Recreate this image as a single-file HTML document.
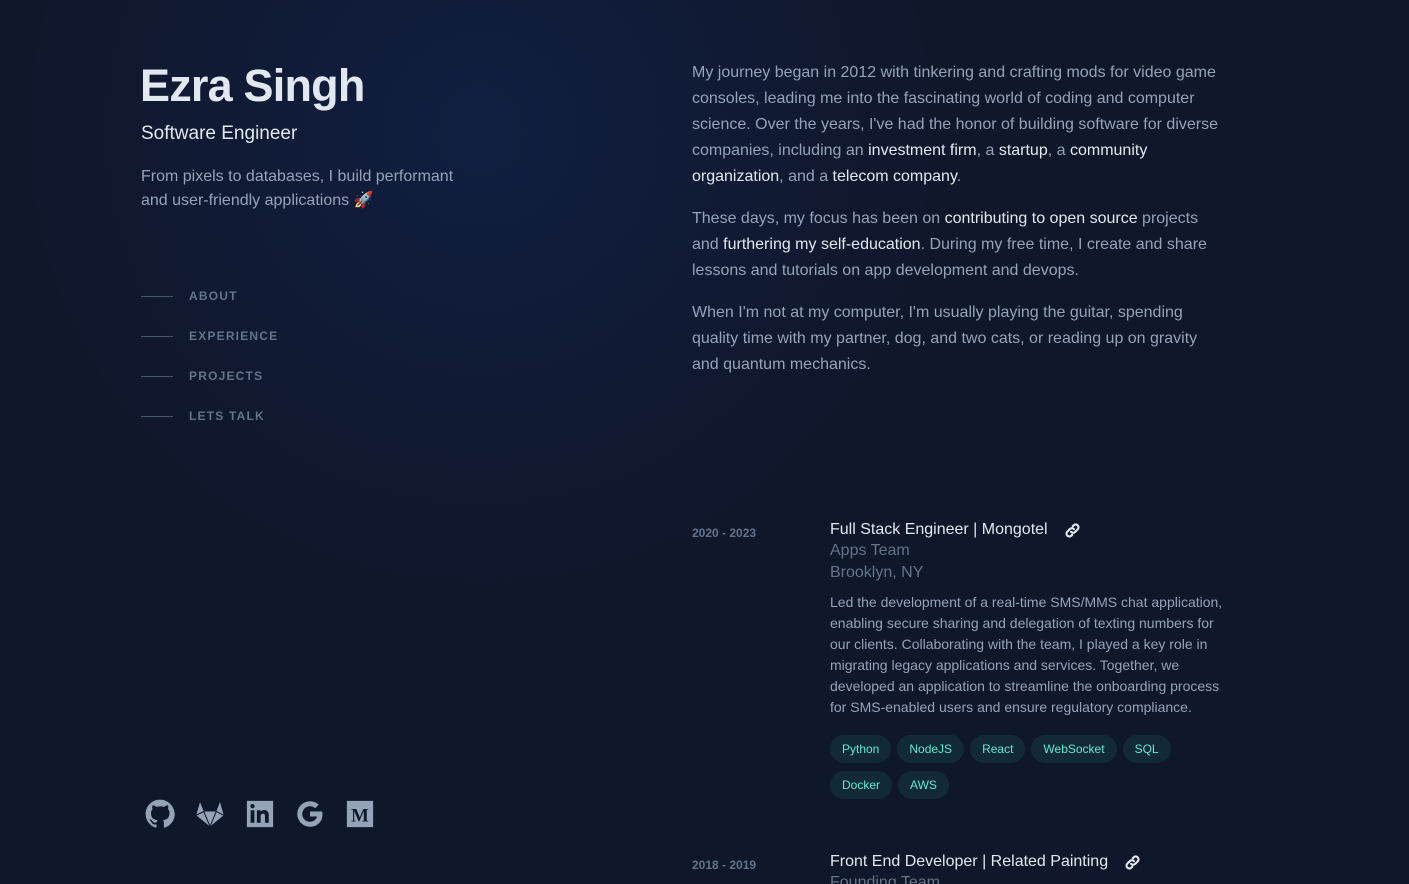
<!DOCTYPE html>
<html><head><meta charset="utf-8"><style>
*{margin:0;padding:0;box-sizing:border-box}
html,body{width:1409px;height:884px;overflow:hidden}
body{background:#0f172a;font-family:"Liberation Sans","DejaVu Sans",sans-serif;color:#94a3b8;position:relative}
.glow{position:absolute;inset:0;background:radial-gradient(600px circle at 480px 130px,rgba(29,78,216,0.13),transparent 80%)}
.abs{position:absolute}
h1{font-size:45px;font-weight:bold;color:#e2e8f0;letter-spacing:-0.8px}
.nav div{position:absolute;left:141px;display:flex;align-items:center;font-size:12px;font-weight:bold;letter-spacing:1.2px;color:#64748b}
.nav span{display:inline-block;width:32px;height:1px;background:#475569;margin-right:16px}
.p{font-size:16px;line-height:26px;width:532px}
.p b{color:#e2e8f0;font-weight:normal}
.date{font-size:12px;font-weight:bold;color:#64748b}
.title{font-size:16px;color:#e2e8f0;display:flex;align-items:center}
.sub{font-size:16px;color:#64748b;line-height:22px}
.desc{font-size:14px;line-height:21px;width:400px}
.tags{display:flex;flex-wrap:wrap;gap:8px 6px;width:400px}
.tags span{background:rgba(45,212,191,0.1);color:#5eead4;font-size:12px;height:28px;line-height:28px;padding:0 12px;border-radius:14px}
svg{fill:#94a3b8}
.lk{margin-left:16px;fill:none;stroke:#e2e8f0;stroke-width:3;stroke-linecap:round}
</style></head><body>
<div class="glow"></div>
<h1 class="abs" style="left:140px;top:60px">Ezra Singh</h1>
<div class="abs" style="left:141px;top:123px;font-size:19px;color:#e2e8f0">Software Engineer</div>
<div class="abs" style="left:141px;top:165px;font-size:16px;line-height:24px;width:330px">From pixels to databases, I build performant and user-friendly applications 🚀</div>
<div class="nav">
<div style="top:289px"><span></span>ABOUT</div>
<div style="top:329px"><span></span>EXPERIENCE</div>
<div style="top:369px"><span></span>PROJECTS</div>
<div style="top:409px"><span></span>LETS TALK</div>
</div>
<div class="abs" style="left:145px;top:799px;display:flex;gap:20px">
<svg width="30" height="30" viewBox="0 0 24 24"><path d="M12 .5C5.6.5.5 5.6.5 12c0 5.1 3.3 9.4 7.9 10.9.6.1.8-.3.8-.6v-2c-3.2.7-3.9-1.5-3.9-1.5-.5-1.3-1.3-1.7-1.3-1.7-1-.7.1-.7.1-.7 1.2.1 1.8 1.2 1.8 1.2 1 1.8 2.8 1.3 3.5 1 .1-.8.4-1.3.7-1.6-2.6-.3-5.3-1.3-5.3-5.7 0-1.3.5-2.3 1.2-3.1-.1-.3-.5-1.5.1-3.1 0 0 1-.3 3.3 1.2a11.5 11.5 0 016 0C17.3 4.7 18.3 5 18.3 5c.6 1.6.2 2.8.1 3.1.8.8 1.2 1.8 1.2 3.1 0 4.4-2.7 5.4-5.3 5.7.4.4.8 1.1.8 2.2v3.2c0 .3.2.7.8.6 4.6-1.5 7.9-5.8 7.9-10.9C23.5 5.6 18.4.5 12 .5z"/></svg>
<svg width="30" height="30" viewBox="0 0 24 24"><path d="M1 13L4 2.5 7 10H17L20 2.5 23 13 12 22z"/><path d="M7 10L12 22 17 10M1 13L7 10M23 13L17 10" fill="none" stroke="#0f172a" stroke-width="0.8"/></svg>
<svg width="30" height="30" viewBox="0 0 24 24"><path d="M1.5 1.5h21v21h-21z M4.5 9v10h3V9z M6 4a1.7 1.7 0 100 3.4A1.7 1.7 0 006 4z M9.5 9v10h3v-5c0-1.5.7-2.3 1.8-2.3s1.7.8 1.7 2.3v5h3v-6c0-2.6-1.5-4.2-3.6-4.2-1.3 0-2.3.6-2.9 1.4V9z" fill-rule="evenodd"/></svg>
<svg width="30" height="30" viewBox="0 0 24 24"><path d="M21.8 10H12v4h5.6c-.6 2.5-2.8 4.2-5.6 4.2a6.2 6.2 0 110-12.4c1.6 0 3 .6 4.1 1.6l2.9-2.9A10.2 10.2 0 0012 1.8a10.2 10.2 0 100 20.4c5.9 0 10-4.1 10-10 0-.8-.1-1.5-.2-2.2z"/></svg>
<svg width="30" height="30" viewBox="0 0 24 24"><path d="M1.5 1.5h21v21h-21z"/><text x="12" y="18" text-anchor="middle" font-family="Liberation Serif,serif" font-weight="bold" font-size="15" fill="#0f172a">M</text></svg>
</div>
<div class="abs p" style="left:692px;top:60px">My journey began in 2012 with tinkering and crafting mods for video game consoles, leading me into the fascinating world of coding and computer science. Over the years, I've had the honor of building software for diverse companies, including an <b>investment firm</b>, a <b>startup</b>, a <b>community organization</b>, and a <b>telecom company</b>.</div>
<div class="abs p" style="left:692px;top:206px;width:515px">These days, my focus has been on <b>contributing to open source</b> projects and <b>furthering my self-education</b>. During my free time, I create and share lessons and tutorials on app development and devops.</div>
<div class="abs p" style="left:692px;top:300px;width:515px">When I'm not at my computer, I'm usually playing the guitar, spending quality time with my partner, dog, and two cats, or reading up on gravity and quantum mechanics.</div>
<div class="abs date" style="left:692px;top:526px">2020 - 2023</div>
<div class="abs" style="left:830px;top:521px">
<div class="title">Full Stack Engineer | Mongotel <svg class="lk" width="17" height="17" viewBox="0 0 24 24"><path d="M10 14a4 4 0 005.7 0l3.6-3.6a4 4 0 00-5.7-5.7l-1.3 1.3"/><path d="M14 10a4 4 0 00-5.7 0l-3.6 3.6a4 4 0 005.7 5.7l1.3-1.3"/></svg></div>
<div class="sub" style="margin-top:1px">Apps Team</div>
<div class="sub">Brooklyn, NY</div>
<div class="desc" style="margin-top:8px">Led the development of a real-time SMS/MMS chat application, enabling secure sharing and delegation of texting numbers for our clients. Collaborating with the team, I played a key role in migrating legacy applications and services. Together, we developed an application to streamline the onboarding process for SMS-enabled users and ensure regulatory compliance.</div>
<div class="tags" style="margin-top:17px"><span>Python</span><span>NodeJS</span><span>React</span><span>WebSocket</span><span>SQL</span><span>Docker</span><span>AWS</span></div>
</div>
<div class="abs date" style="left:692px;top:858px">2018 - 2019</div>
<div class="abs" style="left:830px;top:853px">
<div class="title">Front End Developer | Related Painting <svg class="lk" width="17" height="17" viewBox="0 0 24 24"><path d="M10 14a4 4 0 005.7 0l3.6-3.6a4 4 0 00-5.7-5.7l-1.3 1.3"/><path d="M14 10a4 4 0 00-5.7 0l-3.6 3.6a4 4 0 005.7 5.7l1.3-1.3"/></svg></div>
<div class="sub" style="margin-top:1px">Founding Team</div>
</div>
</body></html>
